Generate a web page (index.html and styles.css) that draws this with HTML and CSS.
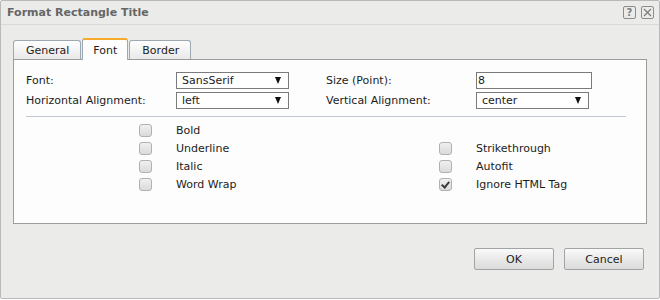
FILE: index.html
```html
<!DOCTYPE html>
<html>
<head>
  <meta charset="UTF-8">
  <title>Format Rectangle Title</title>
  <link rel="stylesheet" href="styles.css">
</head>
<body>
<div class="dialog">
  <div class="titleBar">
    <h1>Format Rectangle Title</h1>
    <div class="titleTools">
      <span class="tool">?</span>
      <span class="tool">
        <svg width="9" height="9" viewBox="0 0 9 9"><path d="M1 1L8 8M8 1L1 8" stroke="#7d7d7d" stroke-width="1.3"/></svg>
      </span>
    </div>
  </div>
  <div class="dialogBody">
    <div class="tabs">
      <a href="#" class="tab">General</a>
      <a href="#" class="tab selected">Font</a>
      <a href="#" class="tab">Border</a>
    </div>
    <div class="panel">
      <div class="fields">
        <label>Font:</label>
        <div class="select">SansSerif</div>
        <label>Size (Point):</label>
        <div class="input">8</div>
        <label>Horizontal Alignment:</label>
        <div class="select">left</div>
        <label>Vertical Alignment:</label>
        <div class="select">center</div>
      </div>
      <hr>
      <div class="checks">
        <span class="box"></span><span>Bold</span><span></span><span></span>
        <span class="box"></span><span>Underline</span><span class="box"></span><span>Strikethrough</span>
        <span class="box"></span><span>Italic</span><span class="box"></span><span>Autofit</span>
        <span class="box"></span><span>Word Wrap</span><span class="box checked"></span><span>Ignore HTML Tag</span>
      </div>
    </div>
    <div class="buttons">
      <button>OK</button>
      <button>Cancel</button>
    </div>
  </div>
</div>
</body>
</html>
```
FILE: styles.css
```css
body {
  margin: 0;
  padding: 0;
  font-family: 'DejaVu Sans', sans-serif;
  font-size: 10px;
  color: #1c1c1c;
}
.dialog {
  box-sizing: border-box;
  width: 660px;
  height: 299px;
  border: 1px solid #b9b9b9;
  border-radius: 2px;
  background-color: #ebecea;
}
.titleBar {
  display: flex;
  align-items: center;
  justify-content: space-between;
  height: 23px;
  padding: 0 5px 0 6px;
  border-bottom: 1px solid #d9dad8;
}
.titleBar h1 {
  margin: 0;
  font-size: 11px;
  font-weight: bold;
  color: #666;
}
.titleTools {
  display: flex;
  gap: 5px;
}
.tool {
  box-sizing: border-box;
  display: flex;
  align-items: center;
  justify-content: center;
  width: 13px;
  height: 13px;
  border: 1px solid #8c8c8c;
  border-radius: 2px;
  font-size: 10px;
  font-weight: bold;
  color: #7d7d7d;
  line-height: 1;
}
.dialogBody {
  padding: 13px 12px 0 12px;
}
.tabs {
  display: flex;
  align-items: flex-end;
  height: 21px;
}
.tab {
  box-sizing: border-box;
  display: block;
  height: 19px;
  padding: 3px 11px 0 12px;
  margin-right: 1px;
  border: 1px solid #9ea8b2;
  border-bottom: none;
  border-radius: 3px 3px 0 0;
  background: linear-gradient(#fefefe, #e9e9e9);
  color: #1c1c1c;
  text-decoration: none;
  font-size: 11px;
}
.tab.selected {
  height: 22px;
  margin-bottom: -1px;
  padding: 4px 10px 0 10px;
  border-top: 2px solid #f6a92b;
  border-color: #f6a92b #9ea8b2 #9ea8b2 #9ea8b2;
  background: #fcfdfc;
  position: relative;
}
.panel {
  box-sizing: border-box;
  height: 165px;
  border: 1px solid #9c9c9c;
  background-color: #fcfdfc;
  padding: 12px 20px 0 12px;
}
.fields {
  display: grid;
  grid-template-columns: 150px 150px 150px auto;
  grid-auto-rows: 17px;
  row-gap: 3px;
  align-items: center;
  font-size: 11px;
}
.select,
.input {
  box-sizing: border-box;
  height: 17px;
  border: 1px solid #7b7b7b;
  background: #fff;
  line-height: 15px;
}
.select {
  position: relative;
  width: 113px;
  padding-left: 5px;
}
.select:after {
  content: '';
  position: absolute;
  right: 7px;
  top: 4px;
  border-left: 3.5px solid transparent;
  border-right: 3.5px solid transparent;
  border-top: 7px solid #111;
}
.input {
  width: 116px;
  padding-left: 1px;
}
hr {
  margin: 7px 0 0 0;
  border: none;
  border-top: 1px solid #c3c9d0;
}
.checks {
  display: grid;
  grid-template-columns: 37px 263px 37px auto;
  grid-auto-rows: 18px;
  align-items: center;
  padding: 4px 0 0 113px;
  font-size: 11px;
}
.box {
  box-sizing: border-box;
  position: relative;
  width: 13px;
  height: 13px;
  border: 1px solid #b1b1b1;
  border-radius: 3px;
  background: linear-gradient(#f0f0f0, #dadada);
}
.box.checked:after {
  content: '';
  position: absolute;
  left: 3px;
  top: 1px;
  width: 3px;
  height: 6px;
  border: solid #3a3a3a;
  border-width: 0 2px 2px 0;
  transform: rotate(40deg);
}
.buttons {
  display: flex;
  justify-content: flex-end;
  gap: 10px;
  padding: 24px 3px 0 0;
}
button {
  width: 80px;
  height: 22px;
  border: 1px solid #a3a3a3;
  border-radius: 2px;
  background: linear-gradient(#fafafa, #e6e6e6 60%, #dcdcdc);
  font-family: 'DejaVu Sans', sans-serif;
  font-size: 11px;
  color: #1c1c1c;
}
```
